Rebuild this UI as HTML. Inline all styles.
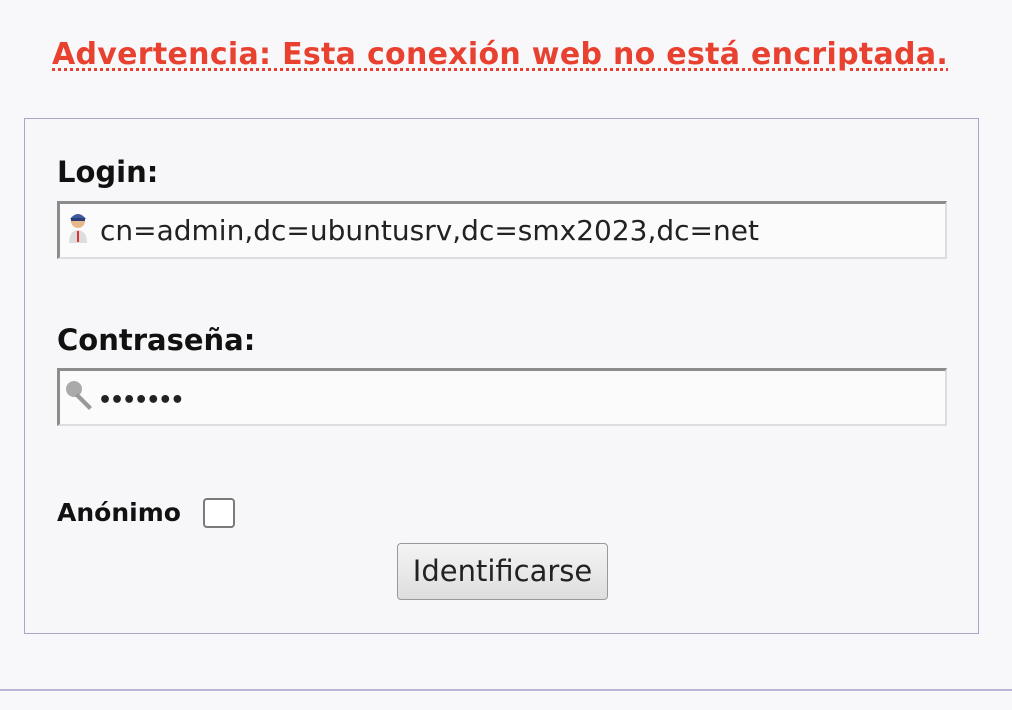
<!DOCTYPE html>
<html><head><style>
body{margin:0;width:1012px;height:710px;background:#f8f8fb;font-family:"DejaVu Sans","Liberation Sans",sans-serif;position:relative;overflow:hidden}
.warn{position:absolute;left:52px;top:37px;color:#e8412f;font-weight:bold;font-size:30px;text-decoration:underline dotted;text-underline-offset:4px;white-space:nowrap;letter-spacing:0.3px}
.box{position:absolute;left:24px;top:118px;width:953px;height:514px;border:1px solid #a9a6cc;background:#f7f7f9}
.lbl{position:absolute;left:32px;font-weight:bold;font-size:29px;color:#111;line-height:34px}
.inp{position:absolute;left:32px;width:885px;height:53px;background:#fbfbfc;border-top:3px solid #8c8c8c;border-left:3px solid #8c8c8c;border-right:2px solid #ddd;border-bottom:2px solid #ddd;font-size:28px;color:#222;line-height:53px;white-space:nowrap}
.chk{position:absolute;left:178px;top:379px;width:28px;height:26px;border:2px solid #7a7a7a;border-radius:4px;background:#fff}
.btn{position:absolute;left:372px;top:424px;width:209px;height:55px;border:1px solid #999;border-radius:4px;background:linear-gradient(#f4f4f4,#dedede);font-size:29px;text-align:center;line-height:55px;color:#222}
.hr{position:absolute;left:0;top:689px;width:1012px;height:2px;background:#b9b8d4}
</style></head><body>
<div class="warn">Advertencia: Esta conexión web no está encriptada.</div>
<div class="box">
<div class="lbl" style="top:36px">Login:</div>
<div class="inp" style="top:82px"><svg width="40" height="40" style="vertical-align:middle;margin:-6px 0 0 4px" viewBox="0 0 40 40"><circle cx="14" cy="12" r="7" fill="#e8b88a"/><path d="M6 10 Q14 0 22 10Z" fill="#3d5aa0"/><rect x="7" y="9" width="14" height="3" fill="#2a3e78"/><path d="M5 34 Q5 22 14 21 Q23 22 23 34Z" fill="#ddd"/><rect x="13" y="22" width="2" height="11" fill="#d33"/></svg><span style="margin-left:-4px">cn=admin,dc=ubuntusrv,dc=smx2023,dc=net</span></div>
<div class="lbl" style="top:204px">Contraseña:</div>
<div class="inp" style="top:249px"><svg width="40" height="40" style="vertical-align:middle;margin:-6px 0 0 2px" viewBox="0 0 40 40"><circle cx="12" cy="13" r="8" fill="#aaa"/><path d="M16 17 L30 31 L27 34 L13 20Z" fill="#999"/></svg><span style="margin-left:-4px;font-weight:bold;font-size:22px;letter-spacing:-2px">•••••••</span></div>
<div class="lbl" style="top:377px;font-size:25px">Anónimo</div>
<div class="chk"></div>
<div class="btn">Identificarse</div>
</div>
<div class="hr"></div>
</body></html>
